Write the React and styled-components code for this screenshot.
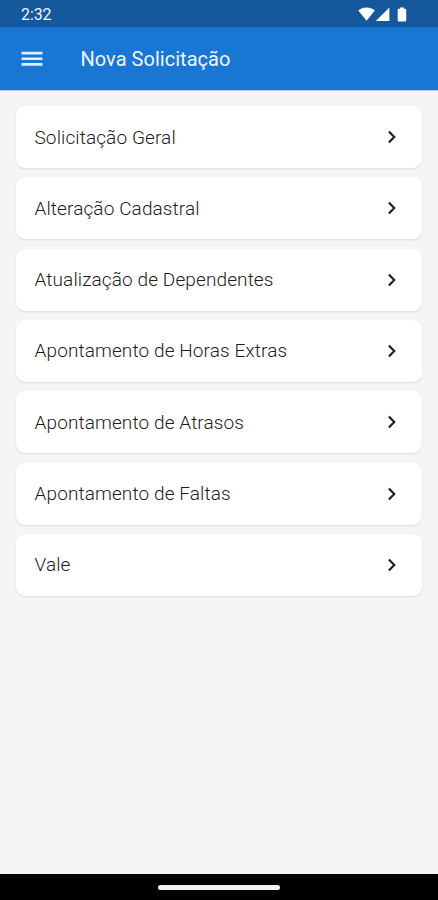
import React from "react";
import styled, { createGlobalStyle } from "styled-components";

const GlobalStyle = createGlobalStyle`
  * { box-sizing: border-box; }
  body { margin: 0; font-family: Roboto, sans-serif; background: #f5f5f5; }
`;

const Screen = styled.div`
  display: flex;
  flex-direction: column;
  height: 900px;
  background: #f5f5f5;
`;

const StatusBar = styled.div`
  display: flex;
  align-items: center;
  justify-content: space-between;
  height: 27px;
  flex: none;
  padding: 2px 30px 0 21px;
  background: #15599c;
  color: #eef5fc;
`;

const Clock = styled.span`
  font-size: 16px;
  line-height: 20px;
  letter-spacing: -0.1px;
`;

const StatusIcons = styled.svg`
  display: block;
  width: 50px;
  height: 16px;
  fill: #fff;
`;

const AppBar = styled.header`
  display: flex;
  align-items: center;
  height: 63px;
  flex: none;
  padding: 0 21px;
  background: #1976d2;
  box-shadow: 0 1px 0 #b9cdea;
`;

const MenuButton = styled.button`
  display: flex;
  width: 22px;
  margin: 0 37.5px 0 0;
  padding: 0;
  border: 0;
  background: none;
`;

const MenuIcon = styled.svg`
  width: 22px;
  height: 16px;
  fill: #e2eefb;
`;

const Title = styled.h1`
  margin: 0;
  font-size: 20px;
  font-weight: 400;
  line-height: 24px;
  letter-spacing: 0.03px;
  color: #eef5fd;
`;

const List = styled.main`
  display: flex;
  flex: 1;
  flex-direction: column;
  gap: 9.33px;
  padding: 16px 16px 0;
`;

const Card = styled.div`
  display: flex;
  align-items: center;
  justify-content: space-between;
  height: 62px;
  flex: none;
  padding: 0 24px 0 18.5px;
  border-radius: 9px;
  background: #fff;
  box-shadow: 0 1px 2px rgba(0, 0, 0, 0.11);
`;

const Label = styled.span`
  padding-top: 1px;
  font-size: 19px;
  font-weight: 300;
  line-height: 24px;
  letter-spacing: 0.11px;
  color: #1c1c1c;
`;

const Chevron = styled.svg`
  width: 12px;
  height: 16px;
  fill: none;
  stroke: #1c1c1c;
  stroke-width: 2.1;
`;

const NavBar = styled.footer`
  display: flex;
  align-items: center;
  justify-content: center;
  height: 26px;
  flex: none;
  background: #000;
`;

const HomeHandle = styled.div`
  width: 122px;
  height: 5px;
  border-radius: 3px;
  background: #f2f2f2;
`;

const items = [
  "Solicitação Geral",
  "Alteração Cadastral",
  "Atualização de Dependentes",
  "Apontamento de Horas Extras",
  "Apontamento de Atrasos",
  "Apontamento de Faltas",
  "Vale",
];

export default function App() {
  return (
    <Screen>
      <GlobalStyle />
      <StatusBar>
        <Clock>2:32</Clock>
        <StatusIcons viewBox="0 0 50 16">
          <path d="M0.3 3.6C4.6-.4 12.4-.4 16.8 3.6L8.5 13.8Z" />
          <path d="M31.4 .4V14H17.8Z" />
          <path d="M42 0.4h4v1.3h1.2q1 0 1 1v10.8q0 1-1 1h-6.5q-1 0-1-1v-10.8q0-1 1-1h1.3z" />
        </StatusIcons>
      </StatusBar>
      <AppBar>
        <MenuButton aria-label="Menu">
          <MenuIcon viewBox="0 0 22 16">
            <path d="M.5 .8h21v2.7H.5zM.5 6.4h21v2.7H.5zM.5 12h21v2.7H.5z" />
          </MenuIcon>
        </MenuButton>
        <Title>Nova Solicitação</Title>
      </AppBar>
      <List>
        {items.map((item) => (
          <Card key={item}>
            <Label>{item}</Label>
            <Chevron viewBox="0 0 12 16">
              <path d="M2.9 2.4 8.3 8l-5.4 5.6" />
            </Chevron>
          </Card>
        ))}
      </List>
      <NavBar>
        <HomeHandle />
      </NavBar>
    </Screen>
  );
}
